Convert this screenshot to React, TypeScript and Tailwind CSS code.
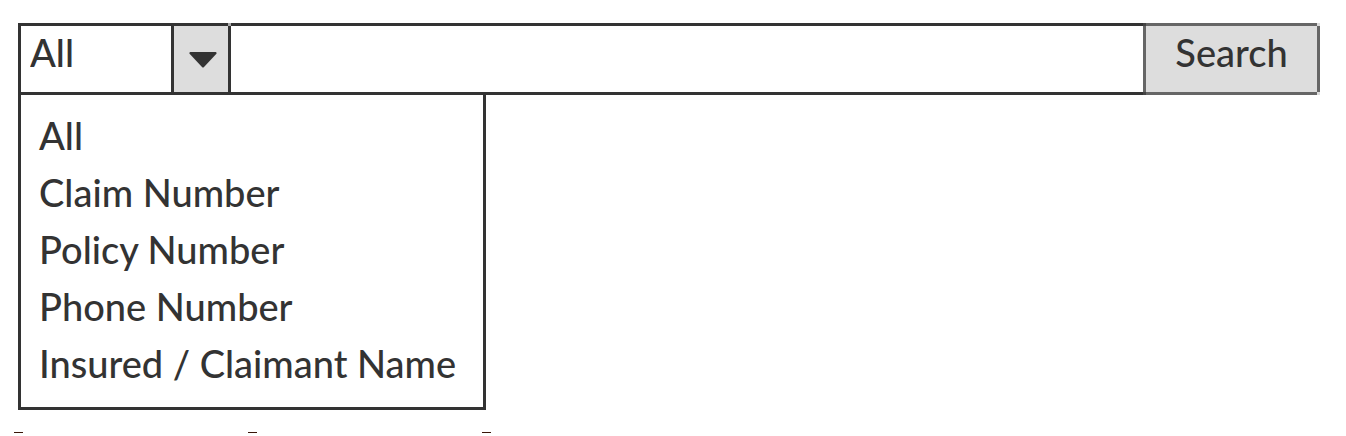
import { useState } from "react";

const FIELDS = [
  "All",
  "Claim Number",
  "Policy Number",
  "Phone Number",
  "Insured / Claimant Name",
];

export default function App() {
  const [field, setField] = useState("All");
  const [open, setOpen] = useState(true);

  return (
    <main className="bg-white pt-[23px] font-['Lato',sans-serif] text-[38px] font-medium text-[#333333]">
      <form
        className="mr-[26px] ml-[18px] flex h-[72px] leading-[46px]"
        onSubmit={(e) => e.preventDefault()}
      >
        <select
          aria-label="Search field"
          value={field}
          onChange={(e) => setField(e.target.value)}
          className="w-[153px] shrink-0 appearance-none border-y-[3px] border-l-[3px] border-[#333333] bg-white pb-3.5 pl-[9px] outline-none"
        >
          {FIELDS.map((name) => (
            <option key={name}>{name}</option>
          ))}
        </select>
        <button
          type="button"
          aria-label="Show search fields"
          aria-expanded={open}
          onClick={() => setOpen(!open)}
          className="relative flex w-[60px] shrink-0 items-center justify-center border-[3px] border-[#333333] bg-[#dddddd] pt-0.5 pl-1"
        >
          <svg width="28" height="16" viewBox="0 0 28 16" fill="#333333" aria-hidden="true">
            <path d="M1.3 0H26.7Q28.3 .6 27.2 2L15 15Q14 16 13 15L.8 2Q-.3 .6 1.3 0Z" />
          </svg>
          <span className="absolute -top-[3px] -right-[3px] size-[3px] bg-[#aaaaaa]" />
        </button>
        <input
          type="text"
          aria-label="Search text"
          className="min-w-0 flex-1 border-y-[3px] border-[#333333] px-3 pb-3.5 outline-none"
        />
        <button
          type="submit"
          className="relative w-[177px] shrink-0 border-[3px] border-[#666666] bg-[#dddddd] pb-3.5"
        >
          Search
          <span className="absolute -top-[3px] -left-[3px] size-[3px] bg-[#444444]" />
          <span className="absolute -bottom-[3px] -left-[3px] size-[3px] bg-[#444444]" />
          <span className="absolute -top-[3px] -right-[3px] size-[3px] bg-[#dddddd]" />
          <span className="absolute -right-[3px] -bottom-[3px] size-[3px] bg-[#dddddd]" />
        </button>
      </form>

      {open && (
        <ul className="ml-[18px] w-[468px] border-x-[3px] border-b-[3px] border-[#333333] pt-3 pb-[15px]">
          {FIELDS.map((name) => (
            <li key={name}>
              <button
                type="button"
                onClick={() => setField(name)}
                className="block h-[57px] w-full pl-[18px] text-left leading-[57px] whitespace-nowrap"
              >
                {name}
              </button>
            </li>
          ))}
        </ul>
      )}

      <div className="mt-[22px] ml-[14px] flex w-[477px] justify-between" aria-hidden="true">
        <span className="h-px w-[9px] bg-[#3a1508]" />
        <span className="h-px w-[9px] bg-[#3a1508]" />
        <span className="h-px w-[9px] bg-[#3a1508]" />
      </div>
    </main>
  );
}
